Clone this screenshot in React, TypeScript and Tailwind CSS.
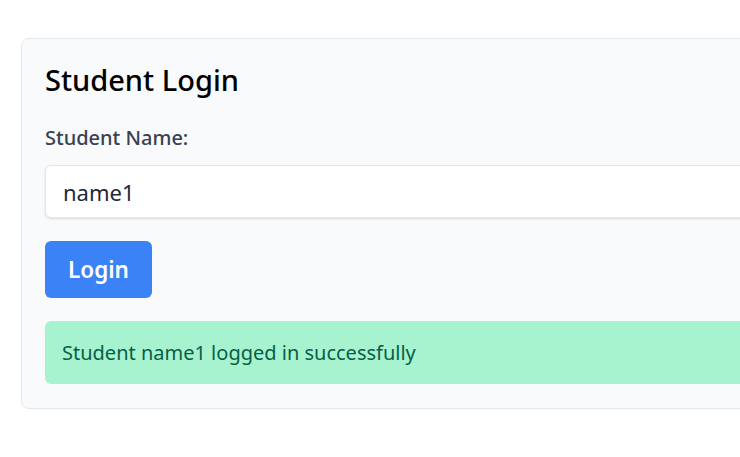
import { useState } from "react";

export default function App() {
  const [name, setName] = useState("name1");

  return (
    <div
      className="h-[457px] w-[740px] overflow-hidden bg-white pl-[21px] pt-[38px]"
      style={{ fontFamily: '"Noto Sans", "Open Sans", sans-serif' }}
    >
      <div className="w-[780px] rounded-lg border border-[#e5e7eb] bg-[#f9fafb] px-[23px] pt-[21px] pb-6">
        <h1 className="text-[29px] font-medium leading-[40px] text-black">Student Login</h1>
        <label className="mt-[26px] block text-[20px] font-medium leading-6 text-[#374151]">
          Student Name:
        </label>
        <input
          value={name}
          onChange={(e) => setName(e.target.value)}
          className="mt-[15px] block h-[53px] w-full rounded-md border border-[#e5e7eb] bg-white px-[17px] text-[22px] text-[#1f2937] shadow-sm outline-none"
        />
        <button className="mt-[23px] block h-[57px] w-[107px] rounded-md bg-[#3b82f6] text-[22.5px] font-semibold text-white">
          Login
        </button>
        <div className="mt-[23px] flex h-[63px] items-center rounded-md bg-[#a7f3d0] px-[17px] text-[20px] text-[#065f46]">
          Student name1 logged in successfully
        </div>
      </div>
    </div>
  );
}
